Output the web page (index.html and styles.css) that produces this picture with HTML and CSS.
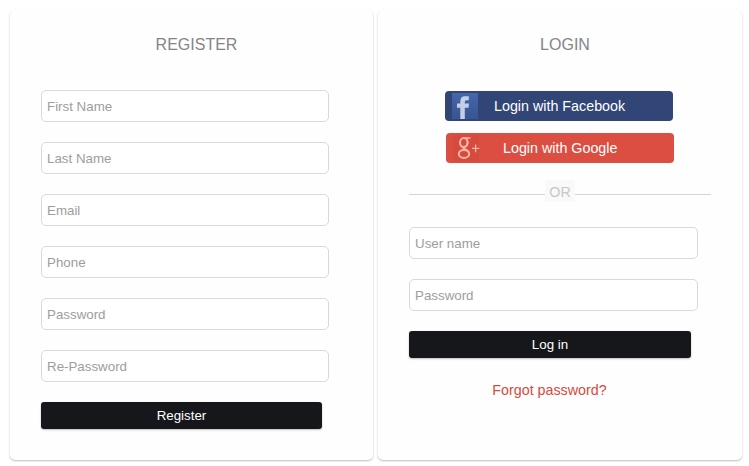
FILE: index.html
```html
<!DOCTYPE html>
<html lang="en">
<head>
<meta charset="utf-8">
<title>Register or log in</title>
<link rel="stylesheet" href="styles.css">
</head>
<body>
<main class="panels">
  <section class="card">
    <h2>REGISTER</h2>
    <form class="register">
      <input type="text" placeholder="First Name">
      <input type="text" placeholder="Last Name">
      <input type="text" placeholder="Email">
      <input type="text" placeholder="Phone">
      <input type="password" placeholder="Password">
      <input type="password" placeholder="Re-Password">
      <button type="button" class="submit">Register</button>
    </form>
  </section>
  <section class="card login">
    <h2>LOGIN</h2>
    <div class="social">
      <a class="provider facebook">
        <svg width="26" height="26" viewBox="0 0 26 26">
          <defs><linearGradient id="fb" x1="0" y1="0" x2="0" y2="1"><stop offset="0" stop-color="#4567a9"/><stop offset="1" stop-color="#375493"/></linearGradient></defs>
          <rect width="26" height="26" fill="url(#fb)"/>
          <path fill="#c3cfe6" d="M8.300 26V14.700H5V10.500H8.300V8.500Q8.300 3.300 13 3.300H16.800V7.300H14.500Q12.800 7.300 12.800 9V10.500H17L16.500 14.700H12.800V26Z"/>
        </svg>
        <span>Login with Facebook</span>
      </a>
      <a class="provider google">
        <svg width="27" height="26" viewBox="0 0 27 26">
          <rect width="26" height="26" fill="#d64b3e"/>
          <g fill="none" stroke="#f5b5a5">
            <ellipse cx="10.800" cy="7.600" rx="3.800" ry="4.500" stroke-width="2"/>
            <path stroke-width="1.500" d="M10.500 3H17.500M13.500 3.500Q15.500 7 14 10Q13 11.300 11.500 12Q9 13.300 11.500 14.500"/>
            <ellipse cx="11" cy="18.900" rx="5.200" ry="4" stroke-width="2"/>
            <path stroke-width="2" d="M11 13.800Q14.500 15 16 17.500"/>
            <path stroke-width="1.300" d="M19 13.300H26.300M22.600 9.500V17.200"/>
          </g>
        </svg>
        <span>Login with Google</span>
      </a>
    </div>
    <div class="divider"><span>OR</span></div>
    <form>
      <input type="text" placeholder="User name">
      <input type="password" placeholder="Password">
      <button type="button" class="submit">Log in</button>
    </form>
    <a class="forgot">Forgot password?</a>
  </section>
</main>
</body>
</html>
```
FILE: styles.css
```css
* { box-sizing: border-box; }
body {
  margin: 0;
  background: #fff;
  font-family: "Liberation Sans", Arial, sans-serif;
}
.panels {
  display: flex;
  gap: 5px;
  padding: 10px 0 6px 10px;
}
.card {
  flex: none;
  width: 363px;
  height: 450px;
  padding: 0 31px;
  background: #fefefe;
  border-radius: 5px;
  box-shadow: 0 1px 2px rgba(0, 0, 0, 0.26);
}
.login { width: 364px; }
h2 {
  margin: 26px 0 36px;
  padding-left: 10px;
  color: #858585;
  font-size: 16px;
  font-weight: 400;
  line-height: 18px;
  text-align: center;
}
form {
  display: flex;
  flex-direction: column;
  gap: 20px;
}
input {
  width: 288px;
  height: 32px;
  padding: 0 5px;
  background: #fff;
  border: 1px solid #d9d9dc;
  border-radius: 5px;
  font: 13.33px "Liberation Sans", Arial, sans-serif;
}
.login input { width: 289px; }
input::placeholder { color: #9d9d9d; opacity: 1; }
.submit {
  width: 281px;
  height: 27px;
  padding: 0;
  color: #fff;
  background: #16171a;
  border: 0;
  border-radius: 3px;
  box-shadow: 0 1px 2px rgba(0, 0, 0, 0.25);
  font: 13.33px "Liberation Sans", Arial, sans-serif;
}
.login .submit { width: 282px; }
.social {
  display: flex;
  flex-direction: column;
  gap: 12px;
  padding-left: 36px;
}
.login h2 { margin-bottom: 37px; }
.provider {
  display: flex;
  align-items: center;
  width: 228px;
  height: 30px;
  padding-left: 7px;
  border-radius: 4px;
  color: #fff;
  font-size: 14.3px;
}
.facebook { background: #314577; }
.facebook span { margin-left: 16px; }
.google {
  margin-left: 1px;
  background: #dc4e42;
}
.google span { margin-left: 23px; }
.divider {
  display: flex;
  align-items: center;
  height: 24px;
  margin: 16px 0 24px;
}
.divider::before, .divider::after {
  content: "";
  flex: 1;
  height: 1px;
  margin-top: 6px;
  background: #d5d5d5;
}
.divider span {
  width: 30px;
  height: 22px;
  background: #f9f9f9;
  color: #c8c8c8;
  font-size: 14.3px;
  line-height: 24px;
  text-align: center;
}
.forgot {
  display: block;
  width: 281px;
  margin-top: 24px;
  color: #d64a40;
  font-size: 14.3px;
  line-height: 17px;
  text-align: center;
}
```
